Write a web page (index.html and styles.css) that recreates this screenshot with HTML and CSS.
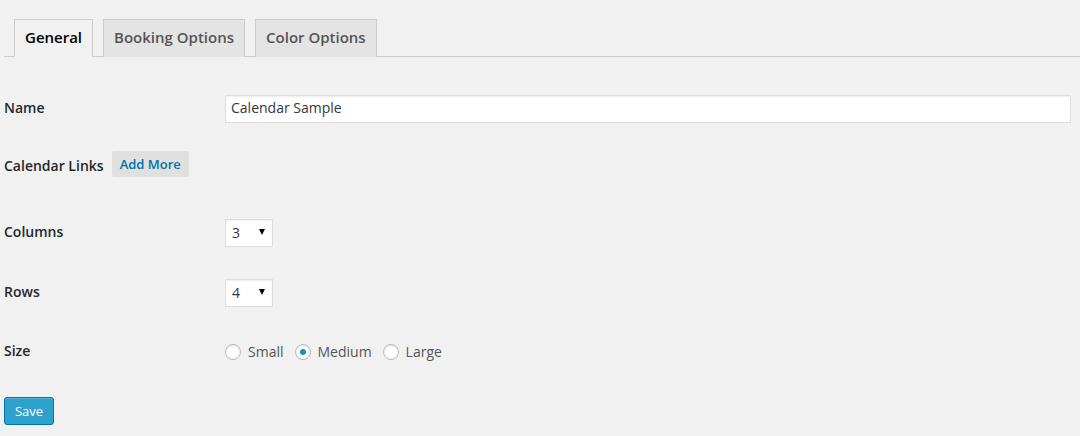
FILE: index.html
```html
<!DOCTYPE html>
<html>
<head>
<meta charset="utf-8">
<link rel="stylesheet" href="styles.css">
</head>
<body>
<div class="wrap">
  <nav class="tabs">
    <a class="tab tab-active">General</a>
    <a class="tab">Booking Options</a>
    <a class="tab">Color Options</a>
  </nav>
  <form class="form">
    <div class="row row-name">
      <label class="label">Name</label>
      <div class="field"><input class="text-input" type="text" value="Calendar Sample"></div>
    </div>
    <div class="row row-links">
      <label class="label label-inline">Calendar Links</label>
      <button type="button" class="btn-secondary">Add More</button>
    </div>
    <div class="row row-columns">
      <label class="label">Columns</label>
      <div class="field"><span class="select"><select><option>3</option></select></span></div>
    </div>
    <div class="row row-rows">
      <label class="label">Rows</label>
      <div class="field"><span class="select"><select><option>4</option></select></span></div>
    </div>
    <div class="row row-size">
      <label class="label">Size</label>
      <div class="field radios">
        <label class="radio"><span class="radio-dot"></span>Small</label>
        <label class="radio"><span class="radio-dot checked"></span>Medium</label>
        <label class="radio"><span class="radio-dot"></span>Large</label>
      </div>
    </div>
    <div class="row row-save">
      <button type="button" class="btn-primary">Save</button>
    </div>
  </form>
</div>
</body>
</html>
```

FILE: styles.css
```css
* { box-sizing: border-box; }
html, body {
  margin: 0;
  background: #f1f1f1;
  font-family: "Open Sans", "Liberation Sans", sans-serif;
  color: #23282d;
}
.wrap {
  padding: 19px 0 0 4px;
}
.tabs {
  display: flex;
  gap: 10px;
  padding-left: 10px;
  border-bottom: 1px solid #ccc;
  height: 38px;
}
.tab {
  display: flex;
  align-items: center;
  height: 38px;
  padding: 0 10px 3px;
  border: 1px solid #ccc;
  border-bottom: none;
  background: #e4e4e4;
  color: #555;
  font-size: 15px;
  font-weight: 600;
  text-decoration: none;
}
.tab-active {
  background: #f1f1f1;
  color: #000;
  height: 38px;
  margin-bottom: -1px;
  padding-bottom: 4px;
}
.form {
  display: flex;
  flex-direction: column;
}
.row {
  display: flex;
  align-items: center;
}
.label {
  width: 221px;
  flex: none;
  font-size: 14px;
  font-weight: 600;
  color: #23282d;
  padding-bottom: 4px;
}
.label-inline { width: auto; margin-right: 8px; padding: 2px 0 0; }
.row-size .label { padding-bottom: 3px; }
.field { flex: 1; }
.row-name { margin-top: 38px; height: 28px; padding-right: 9px; }
.row-links { margin-top: 28px; height: 26px; }
.row-columns { margin-top: 42px; height: 28px; }
.row-rows { margin-top: 32px; height: 28px; }
.row-size { margin-top: 35px; height: 20px; }
.row-save { margin-top: 35px; }
.text-input {
  width: 100%;
  height: 28px;
  border: 1px solid #ddd;
  box-shadow: inset 0 1px 2px rgba(0,0,0,.07);
  background: #fff;
  padding: 0 5px 3px;
  font-family: inherit;
  font-size: 14px;
  color: #32373c;
  outline: none;
}
.btn-secondary {
  height: 26px;
  padding: 0 8px 1px;
  border: none;
  border-radius: 2px;
  background: #e0e0e0;
  color: #0073aa;
  font-family: inherit;
  font-size: 13px;
  font-weight: 600;
}
.select {
  position: relative;
  display: inline-block;
}
.select select {
  appearance: none;
  -webkit-appearance: none;
  width: 48px;
  height: 28px;
  border: 1px solid #ddd;
  box-shadow: inset 0 1px 2px rgba(0,0,0,.07);
  background: #fff;
  padding: 0 6px 2px;
  font-family: inherit;
  font-size: 14px;
  color: #32373c;
}
.select::after {
  content: "";
  position: absolute;
  right: 8px;
  top: 10px;
  width: 0;
  height: 0;
  border-left: 3.5px solid transparent;
  border-right: 3.5px solid transparent;
  border-top: 6px solid #000;
  pointer-events: none;
}
.radios {
  display: flex;
  align-items: center;
}
.radio {
  display: flex;
  align-items: center;
  font-size: 14px;
  color: #555;
  margin-right: 11px;
  padding-bottom: 1px;
}
.radio-dot {
  width: 16px;
  height: 16px;
  border-radius: 50%;
  border: 1px solid #b4b9be;
  background: #fff;
  box-shadow: inset 0 1px 2px rgba(0,0,0,.1);
  margin-right: 7px;
  display: flex;
  align-items: center;
  justify-content: center;
  margin-top: 1px;
}
.radio-dot.checked::before {
  content: "";
  width: 6px;
  height: 6px;
  border-radius: 50%;
  background: #1e8cbe;
}
.btn-primary {
  height: 28px;
  width: 50px;
  padding: 0 0 1px;
  border: 1px solid #0074a2;
  border-radius: 3px;
  background: #2ea2cc;
  box-shadow: inset 0 1px 0 rgba(120,200,230,.5);
  color: #fff;
  font-family: inherit;
  font-size: 13px;
}
```
